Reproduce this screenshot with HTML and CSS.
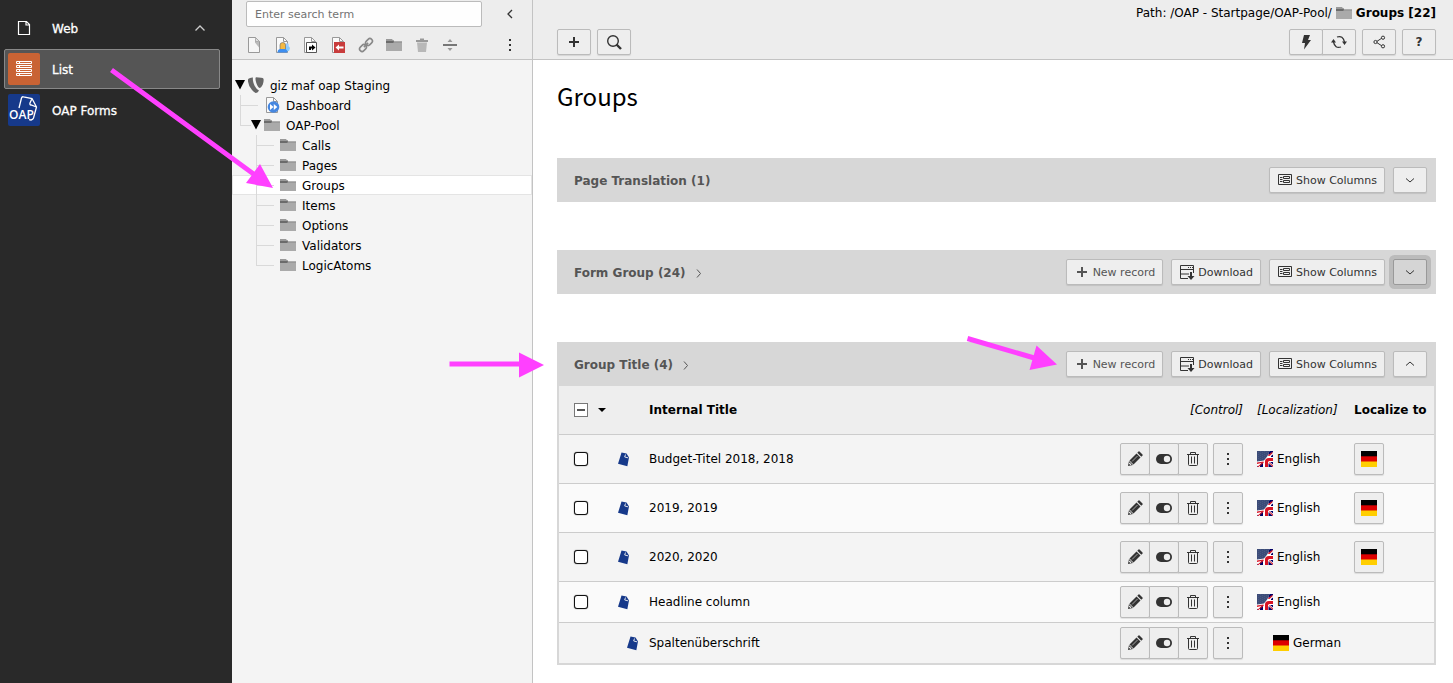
FILE: index.html
```html
<!DOCTYPE html>
<html lang="en">
<head>
<meta charset="utf-8">
<title>Groups</title>
<link rel="stylesheet" href="styles.css">
</head>
<body>
<svg class="sprite" aria-hidden="true">
  <symbol id="i-page" viewBox="0 0 16 16"><path d="M2.5.5h7l4 4v11h-11z" fill="#fff" fill-opacity=".5" stroke="#999"/><path d="M9 1v4.500l4 5V5z" fill="#bbb"/><path d="M9.500.5l4 4h-4z" fill="#ddd" stroke="#999" stroke-width=".6"/></symbol>
  <symbol id="i-sheet" viewBox="0 0 16 16"><path d="M2.500.5h7l4 4v11h-11z" fill="#fafafa" stroke="#999"/><path d="M9.500.5v4h4" fill="none" stroke="#999"/></symbol>
  <symbol id="i-folder" viewBox="0 0 16 16"><path d="M0 3h8v2h8v9H0z" fill="#aaa"/><path d="M8 2h8v2H8z" fill="none"/><path d="M0 2h6l1.500 2H0z" fill="#999"/><path d="M0 4h7.500l.5.500h8v.8H8L7 6H0z" fill="#6b6b6b"/></symbol>
  <symbol id="i-plus" viewBox="0 0 16 16"><path d="M8 3v10M3 8h10" stroke="currentColor" stroke-width="2"/></symbol>
  <symbol id="i-down" viewBox="0 0 16 16"><path d="M4 6.500l4 3.500 4-3.500" fill="none" stroke="currentColor"/></symbol>
  <symbol id="i-up" viewBox="0 0 16 16"><path d="M4 9.500L8 6l4 3.500" fill="none" stroke="currentColor"/></symbol>
  <symbol id="i-right" viewBox="0 0 16 16"><path d="M7 4.500l3.500 4L7 12.500" fill="none" stroke="currentColor"/></symbol>
  <symbol id="i-columns" viewBox="0 0 16 16"><path d="M1.500 2.500h13v10h-13z" fill="none" stroke="currentColor"/><path d="M3 5.500h2.500M3 7.500h2.500M3 9.500h2.500" stroke="currentColor"/><path d="M6.500 4.500h6v2h-6zM6.500 8.500h6v2h-6z" fill="none" stroke="currentColor"/></symbol>
  <symbol id="i-download" viewBox="0 0 16 16"><path d="M9 14.500H1.500v-13h13V9M1.500 5.500h13M1.500 10H10" fill="none" stroke="currentColor"/><path d="M9 3h1v1H9zM11 3h1v1h-1zM13 3h1v1h-1z" fill="currentColor"/><path d="M11 8h2v4h2.500L12 16l-3.500-4H11z" fill="currentColor"/></symbol>
  <symbol id="i-pencil" viewBox="0 0 16 16"><path d="M1 15l1-5 4 4z" fill="#333"/><path d="M2.500 9.500l7-7 4 4-7 7z" fill="#333"/><path d="M10.300 1.700l1.200-1.200q.5-.4 1 0l3 3q.4.5 0 1l-1.200 1.200z" fill="#333"/><path d="M5 10.500l5.500-5.500" stroke="#eee" stroke-width=".6"/><path d="M2.200 12l1.800 1.800" stroke="#eee" stroke-width="1.200"/></symbol>
  <symbol id="i-toggle" viewBox="0 0 16 16"><rect y="3" width="16" height="10" rx="5" fill="#333"/><circle cx="11" cy="8" r="3.200" fill="#eee"/></symbol>
  <symbol id="i-trash" viewBox="0 0 16 16"><path d="M2 3.500h12M5.500 3V1.500h5V3M3.500 4v9.500q0 1 1 1h7q1 0 1-1V4M6.500 5.500v7M9.500 5.500v7" fill="none" stroke="#333"/></symbol>
  <symbol id="i-dots" viewBox="0 0 16 16"><path d="M7 2h2v2H7zM7 7h2v2H7zM7 12h2v2H7z" fill="#333"/></symbol>
  <symbol id="i-de" viewBox="0 0 16 16"><path d="M0 0h16v16H0z" fill="#ffce00"/><path d="M0 0h16v10.500H0z" fill="#d00"/><path d="M0 0h16v5.300H0z"/></symbol>
  <symbol id="i-en" viewBox="0 0 16 16"><path d="M0 0h16v16H0z" fill="#fff"/><path d="M12.500 0H16v1l-3.500 2.500h-1.500zM14 5l2-1.500V7h-2zM0 14.500V16h1zM3 16v-2.500l3-2.500v5zM11 16v-4l5 4zM13 11h3v2.500z" fill="#006"/><path d="M8 16V8.500Q8 6 11 6h5v4.500h-4.500V16z" fill="#fff"/><path d="M8 16v-5.500q0-3.500 4-3.500h4v2.900h-3.500q-1.500 0-1.500 1.600V16z" fill="#d81424"/><path d="M10.500 4.500L15.500.8v1.400L12.500 5zM0 16l6-5 .8.800L1.500 16zM12 11l4 3.500V16l-4-4z" fill="#d81424"/><path d="M0 0h12.500L10.500 5 7 9.500 0 10.500z" fill="#3c4c78"/><path d="M0 11.500l6.500-1v1L0 13z" fill="#d81424"/><path d="M1.500 1v9M3.500 0v9.500M5.500 1v8M7.500 0v6.500M9.500 1v3" stroke="#66769e" stroke-width=".5" stroke-dasharray=".6 1.400"/></symbol>
  <symbol id="i-record" viewBox="0 0 16 16"><path d="M5.500 1.500l5 1 2.500 4-1.700 8.700L2 12.700z" fill="#16398a"/><path d="M9.500 3.500L8.700 6l3.300.8" fill="none" stroke="#f4f4f4" stroke-width=".9"/></symbol>
</svg>

<div class="app">
  <nav class="modules" aria-label="Modules">
    <button class="module">
      <svg class="icon32" viewBox="0 0 32 32"><path d="M10.500 9.500h8l3 3v10h-11zM18 9.500v3.500h3.500" fill="none" stroke="#fff" stroke-width="1.200"/></svg>
      <span>Web</span>
      <svg class="icon chev" viewBox="0 0 16 16"><path d="M3.500 10.500L8 6l4.500 4.500" fill="none" stroke="currentColor" stroke-width="1.300"/></svg>
    </button>
    <a class="module active" href="#list">
      <svg class="icon32" viewBox="0 0 32 32"><rect width="32" height="32" rx="2" fill="#c96334"/><path d="M8.500 8.500h15v2h-15zM8.500 12.500h15v2h-15zM8.500 16.500h15v2h-15zM8.500 20.500h15v2h-15zM11.500 8v3M11.500 12v3M11.500 16v3M11.500 20v3" fill="none" stroke="#fff"/></svg>
      <span>List</span>
    </a>
    <a class="module" href="#forms">
      <svg class="icon32" viewBox="0 0 32 32"><rect width="32" height="32" rx="2" fill="#16398a"/><path d="M11 14l2.500-10q.5-1.600 2-1.200l8.500 1.700 4.500 8.500-3 11q-.5 1.500-2.500 2l-2-.3M24 4.500l-2 4.500q-.5 1.700 1 2l5.500 2" fill="none" stroke="#fff" stroke-width="1.300"/><text x="1" y="25" class="logo-text">OAP</text></svg>
      <span>OAP Forms</span>
    </a>
  </nav>

  <aside class="pagetree">
    <div class="tree-head">
      <div class="tree-search">
        <input type="text" placeholder="Enter search term" aria-label="Enter search term">
        <button class="plain" aria-label="Collapse"><svg class="icon" viewBox="0 0 16 16"><path d="M10 4L6 8l4 4" fill="none" stroke="#333" stroke-width="1.300"/></svg></button>
      </div>
      <div class="tree-tools">
        <button class="plain" aria-label="Page"><svg class="icon"><use href="#i-page"/></svg></button>
        <button class="plain" aria-label="User section"><svg class="icon" viewBox="0 0 16 16"><use href="#i-sheet"/><path d="M11 9q4-1 5 2l-1 3h-4z" fill="#8cf"/><circle cx="13" cy="8" r="1.800" fill="#9cf"/><path d="M6 12.500V8q0-2.500 2.800-2.500T11.500 8v4.500z" fill="#f5b942" stroke="#666" stroke-width=".6"/><path d="M3.500 15.500q0-3.500 3-3.500h4q3 0 3 3.500z" fill="#3d8ef0"/></svg></button>
        <button class="plain" aria-label="Shortcut"><svg class="icon" viewBox="0 0 16 16"><use href="#i-sheet"/><path d="M4.500 5.500h10v10h-10z" fill="#fff" stroke="#555"/><path d="M7 13V9.500h3V7.500l3.500 3-3.500 3v-2H9V13z"/></svg></button>
        <button class="plain" aria-label="Mount point"><svg class="icon" viewBox="0 0 16 16"><use href="#i-sheet"/><path d="M4 5h11v11H4z" fill="#c83c3c"/><path d="M5.500 10.500L9 7.500v2h4.500v2H9v2z" fill="#fff"/></svg></button>
        <button class="plain" aria-label="Link"><svg class="icon" viewBox="0 0 16 16"><g transform="rotate(-45 8 8)" fill="none" stroke="#888" stroke-width="1.600"><rect x="0" y="5.500" width="7.500" height="5" rx="2.500"/><rect x="8.500" y="5.500" width="7.500" height="5" rx="2.500"/><path d="M5 8h6"/></g></svg></button>
        <button class="plain" aria-label="Folder"><svg class="icon"><use href="#i-folder"/></svg></button>
        <button class="plain" aria-label="Recycler"><svg class="icon" viewBox="0 0 16 16"><path d="M2 3h4V1.500h4V3h4v2H2z" fill="#999"/><path d="M3 5.500h10L12 15H4z" fill="#b8b8b8"/></svg></button>
        <button class="plain" aria-label="Divider"><svg class="icon" viewBox="0 0 16 16"><path d="M1 7h14v2H1z" fill="#777"/><path d="M5.500 5L8 2l2.500 3zM5.500 11L8 14l2.500-3z" fill="#999"/></svg></button>
        <button class="plain more" aria-label="More"><svg class="icon"><use href="#i-dots"/></svg></button>
      </div>
    </div>
    <ul class="tree">
      <li class="node root"><svg class="caret" viewBox="0 0 10 10"><path d="M0 0h10L5 9.500z"/></svg><svg class="icon" viewBox="0 0 16 16"><path d="M5 .5Q.5 1 0 2.500q-.5 5 4 10.500 2 2.500 4 3 2-.5 3-2.500Q7.500 12 5.500 6 4.500 2.500 5 .5zM8 .3q6.500 0 7.500 1.500.5 2.500-.8 6Q13 11 12 11q-2 0-3.700-5Q6.800 1 8 .3z" fill="#666"/></svg>giz maf oap Staging</li>
      <li class="node l1"><span class="guide"></span><svg class="icon" viewBox="0 0 16 16"><use href="#i-sheet"/><circle cx="9.500" cy="10" r="5.800" fill="#4687e0"/><path d="M6 7l3.500 3L6 13zM9.800 7l3.500 3-3.500 3z" fill="#fff"/></svg>Dashboard</li>
      <li class="node l1 parent"><span class="guide last"></span><svg class="caret" viewBox="0 0 10 10"><path d="M0 0h10L5 9.500z"/></svg><svg class="icon"><use href="#i-folder"/></svg>OAP-Pool</li>
      <li class="node l2"><span class="guide"></span><svg class="icon"><use href="#i-folder"/></svg>Calls</li>
      <li class="node l2"><span class="guide"></span><svg class="icon"><use href="#i-folder"/></svg>Pages</li>
      <li class="node l2 selected"><span class="guide"></span><svg class="icon"><use href="#i-folder"/></svg>Groups</li>
      <li class="node l2"><span class="guide"></span><svg class="icon"><use href="#i-folder"/></svg>Items</li>
      <li class="node l2"><span class="guide"></span><svg class="icon"><use href="#i-folder"/></svg>Options</li>
      <li class="node l2"><span class="guide"></span><svg class="icon"><use href="#i-folder"/></svg>Validators</li>
      <li class="node l2"><span class="guide last"></span><svg class="icon"><use href="#i-folder"/></svg>LogicAtoms</li>
    </ul>
  </aside>

  <main class="content">
    <header class="dochead">
      <div class="path"><span>Path: /OAP - Startpage/OAP-Pool/</span><svg class="icon"><use href="#i-folder"/></svg><strong>Groups [22]</strong></div>
      <div class="bar">
        <button class="btn sq" aria-label="New"><svg class="icon"><use href="#i-plus"/></svg></button>
        <button class="btn sq" aria-label="Search"><svg class="icon" viewBox="0 0 16 16"><circle cx="7" cy="7" r="5.300" fill="none" stroke="#333" stroke-width="1.400"/><path d="M10.500 10.500l4.500 4.500" stroke="#333" stroke-width="2.400"/></svg></button>
        <div class="group push">
          <button class="btn sq" aria-label="Clear cache"><svg class="icon" viewBox="0 0 16 16"><path d="M6 1h6l-2 5h3L6 15.500 7 9H4z" fill="#333"/></svg></button>
          <button class="btn sq" aria-label="Reload"><svg class="icon" viewBox="0 0 16 16"><path d="M6 3q6-2 7.500 5M10 13q-6 2-7.500-5" fill="none" stroke="#333" stroke-width="1.300"/><path d="M11 7.500h5L13.500 11zM0 8.500h5L2.500 5z" fill="#333"/></svg></button>
        </div>
        <button class="btn sq" aria-label="Share"><svg class="icon" viewBox="0 0 16 16"><path d="M11 4L5 8l6 4" fill="none" stroke="#333"/><g fill="#eee" stroke="#333"><circle cx="12" cy="3.700" r="1.600"/><circle cx="4.500" cy="8" r="1.600"/><circle cx="12" cy="12.300" r="1.600"/></g></svg></button>
        <button class="btn sq help">?</button>
      </div>
    </header>

    <div class="body">
      <h1>Groups</h1>

      <section class="panel">
        <div class="panel-head"><h2>Page Translation (1)</h2>
          <button class="btn"><svg class="icon"><use href="#i-columns"/></svg>Show Columns</button>
          <button class="btn sq" aria-label="Expand"><svg class="icon"><use href="#i-down"/></svg></button>
        </div>
      </section>

      <section class="panel">
        <div class="panel-head"><h2>Form Group (24)<svg class="icon"><use href="#i-right"/></svg></h2>
          <button class="btn new"><svg class="icon"><use href="#i-plus"/></svg>New record</button>
          <button class="btn dl"><svg class="icon"><use href="#i-download"/></svg>Download</button>
          <button class="btn"><svg class="icon"><use href="#i-columns"/></svg>Show Columns</button>
          <button class="btn sq focused" aria-label="Expand"><svg class="icon"><use href="#i-down"/></svg></button>
        </div>
      </section>

      <section class="panel">
        <div class="panel-head"><h2>Group Title (4)<svg class="icon"><use href="#i-right"/></svg></h2>
          <button class="btn new"><svg class="icon"><use href="#i-plus"/></svg>New record</button>
          <button class="btn dl"><svg class="icon"><use href="#i-download"/></svg>Download</button>
          <button class="btn"><svg class="icon"><use href="#i-columns"/></svg>Show Columns</button>
          <button class="btn sq" aria-label="Collapse"><svg class="icon"><use href="#i-up"/></svg></button>
        </div>
        <div class="table-wrap">
        <table>
          <colgroup><col class="c-check"><col class="c-icon"><col><col class="c-control"><col class="c-lang"><col class="c-to"></colgroup>
          <thead>
            <tr><th><span class="checks"><input class="all" type="checkbox" aria-label="Toggle all"><svg class="drop" viewBox="0 0 8 4"><path d="M0 0h8L4 4z"/></svg></span></th><th></th><th>Internal Title</th><th class="em control">[Control]</th><th class="em">[Localization]</th><th>Localize to</th></tr>
          </thead>
          <tbody>
            <tr class="tall"><td><input type="checkbox" aria-label="Select Budget-Titel 2018"></td><td><svg class="icon rec"><use href="#i-record"/></svg></td><td>Budget-Titel 2018, 2018</td>
              <td><div class="actions"><div class="group"><button class="btn act" aria-label="Edit"><svg class="icon"><use href="#i-pencil"/></svg></button><button class="btn act" aria-label="Hide"><svg class="icon"><use href="#i-toggle"/></svg></button><button class="btn act" aria-label="Delete"><svg class="icon"><use href="#i-trash"/></svg></button></div><button class="btn act" aria-label="More"><svg class="icon"><use href="#i-dots"/></svg></button></div></td>
              <td><span class="lang"><svg class="icon"><use href="#i-en"/></svg>English</span></td><td><button class="btn act" aria-label="Localize to German"><svg class="icon"><use href="#i-de"/></svg></button></td></tr>
            <tr class="tall"><td><input type="checkbox" aria-label="Select 2019"></td><td><svg class="icon rec"><use href="#i-record"/></svg></td><td>2019, 2019</td>
              <td><div class="actions"><div class="group"><button class="btn act" aria-label="Edit"><svg class="icon"><use href="#i-pencil"/></svg></button><button class="btn act" aria-label="Hide"><svg class="icon"><use href="#i-toggle"/></svg></button><button class="btn act" aria-label="Delete"><svg class="icon"><use href="#i-trash"/></svg></button></div><button class="btn act" aria-label="More"><svg class="icon"><use href="#i-dots"/></svg></button></div></td>
              <td><span class="lang"><svg class="icon"><use href="#i-en"/></svg>English</span></td><td><button class="btn act" aria-label="Localize to German"><svg class="icon"><use href="#i-de"/></svg></button></td></tr>
            <tr class="tall"><td><input type="checkbox" aria-label="Select 2020"></td><td><svg class="icon rec"><use href="#i-record"/></svg></td><td>2020, 2020</td>
              <td><div class="actions"><div class="group"><button class="btn act" aria-label="Edit"><svg class="icon"><use href="#i-pencil"/></svg></button><button class="btn act" aria-label="Hide"><svg class="icon"><use href="#i-toggle"/></svg></button><button class="btn act" aria-label="Delete"><svg class="icon"><use href="#i-trash"/></svg></button></div><button class="btn act" aria-label="More"><svg class="icon"><use href="#i-dots"/></svg></button></div></td>
              <td><span class="lang"><svg class="icon"><use href="#i-en"/></svg>English</span></td><td><button class="btn act" aria-label="Localize to German"><svg class="icon"><use href="#i-de"/></svg></button></td></tr>
            <tr><td><input type="checkbox" aria-label="Select Headline column"></td><td><svg class="icon rec"><use href="#i-record"/></svg></td><td>Headline column</td>
              <td><div class="actions"><div class="group"><button class="btn act" aria-label="Edit"><svg class="icon"><use href="#i-pencil"/></svg></button><button class="btn act" aria-label="Hide"><svg class="icon"><use href="#i-toggle"/></svg></button><button class="btn act" aria-label="Delete"><svg class="icon"><use href="#i-trash"/></svg></button></div><button class="btn act" aria-label="More"><svg class="icon"><use href="#i-dots"/></svg></button></div></td>
              <td><span class="lang"><svg class="icon"><use href="#i-en"/></svg>English</span></td><td></td></tr>
            <tr class="child"><td></td><td><svg class="icon rec"><use href="#i-record"/></svg></td><td>Spaltenüberschrift</td>
              <td><div class="actions"><div class="group"><button class="btn act" aria-label="Edit"><svg class="icon"><use href="#i-pencil"/></svg></button><button class="btn act" aria-label="Hide"><svg class="icon"><use href="#i-toggle"/></svg></button><button class="btn act" aria-label="Delete"><svg class="icon"><use href="#i-trash"/></svg></button></div><button class="btn act" aria-label="More"><svg class="icon"><use href="#i-dots"/></svg></button></div></td>
              <td><span class="lang"><svg class="icon"><use href="#i-de"/></svg>German</span></td><td></td></tr>
          </tbody>
        </table>
        </div>
      </section>
    </div>
  </main>
</div>

<svg class="annotations" width="1100" height="400" viewBox="0 0 1100 400" aria-hidden="true">
  <g stroke="#ff40ff" stroke-width="5" fill="none"><path d="M111.500 70L255 175M449.500 364H522M967.500 338.500L1036 358.500"/></g>
  <path d="M260 164l13 24-27-5zM519 352.500l25 12.500-25 12.500zM1036.500 345.500l20.500 19-27.500 5.500z" fill="#ff40ff"/>
</svg>
</body>
</html>
```

FILE: styles.css
```css
* { box-sizing: border-box; }

body {
  margin: 0;
  font: 12px/18px Verdana, "DejaVu Sans", sans-serif;
  color: #000;
  background: #fff;
}

button, input { font: inherit; color: inherit; margin: 0; }
svg { display: block; flex: none; }

.sprite { display: none; }
.icon { width: 16px; height: 16px; }
.icon32 { width: 32px; height: 32px; }

.app {
  display: grid;
  grid-template-columns: 232px 301px minmax(0, 1fr);
  min-height: 100vh;
}

/* Module menu */
.modules {
  display: flex;
  flex-direction: column;
  gap: 1px;
  padding: 8px 12px 8px 4px;
  background: #292929;
}

.module {
  display: flex;
  align-items: center;
  gap: 12px;
  height: 40px;
  padding: 3px;
  border: 1px solid transparent;
  border-radius: 2px;
  background: none;
  color: #fff;
  text-decoration: none;
  -webkit-text-stroke: 0.3px #fff;
}

.module span { padding-top: 2px; }
.module.active { background: #555; border-color: #888; }
.chev { margin-left: auto; margin-right: 8px; color: #ccc; }

.logo-text {
  font: 600 12px "Open Sans", sans-serif;
  fill: #fff;
  -webkit-text-stroke: 0;
}

/* Page tree */
.pagetree {
  background: #f4f4f4;
  border-right: 1px solid #c3c3c3;
}

.tree-head {
  height: 60px;
  padding: 1px 14px 0;
  background: #ededed;
  border-bottom: 1px solid #c3c3c3;
}

.tree-search { display: flex; align-items: center; gap: 20px; }

.tree-search input {
  width: 236px;
  height: 26px;
  padding: 0 8px;
  border: 1px solid #bbb;
  border-radius: 2px;
  background: #fefefe;
  font-size: 11px;
}

.tree-search input::placeholder { color: #737373; opacity: 1; }

.plain { padding: 0; border: 0; background: none; }

.tree-tools { display: flex; gap: 12px; padding: 10px 0 0; }
.more { margin-left: auto; }

.tree { list-style: none; margin: 0; padding: 15px 0 0; }

.node { display: flex; align-items: center; gap: 6px; height: 20px; padding-top: 2px; }
.node > * { margin-top: -2px; }
.node .caret { width: 10px; height: 10px; }
.root { padding-left: 3px; }
.root .caret, .parent .caret { margin-right: -3px; }
.l1 { padding-left: 8px; }
.l2 { padding-left: 24px; }
.selected { background: #fff; box-shadow: inset 0 0 0 1px #e4e4e4; }

.guide {
  width: 18px;
  height: 20px;
  background:
    linear-gradient(#d9d9d9, #d9d9d9) 0 10px / 100% 1px no-repeat,
    linear-gradient(#d9d9d9, #d9d9d9) 0 0 / 1px 100% no-repeat;
}

.guide.last {
  background-size: 100% 1px, 1px 10px;
}

.parent .guide { width: 11px; margin-right: -6px; }

/* Document header */
.dochead {
  height: 60px;
  padding: 4px 17px 0 24px;
  background: #ededed;
  border-bottom: 1px solid #c3c3c3;
}

.path { display: flex; justify-content: flex-end; align-items: center; gap: 4px; }
.bar { display: flex; gap: 6px; padding-top: 7px; }
.push { margin-left: auto; }

.btn {
  display: flex;
  align-items: center;
  justify-content: center;
  gap: 3px;
  height: 26px;
  padding: 2px 7px 0;
  border: 1px solid #bbb;
  border-radius: 2px;
  background: #eee;
  box-shadow: 0 1px 1px rgba(0, 0, 0, 0.1);
  color: #333;
  font-size: 11px;
  line-height: 16px;
  white-space: nowrap;
}

.btn > svg { margin-top: -2px; }
.btn.sq { width: 34px; padding: 2px 0 0; }
.btn.new { color: #555; }
.btn.help { padding: 0; font-weight: bold; font-size: 12px; }
.btn.act { width: 30px; height: 32px; padding: 2px 0 0; }
.btn.focused { background: #d5d5d5; border-color: #999; box-shadow: 0 0 0 4px #bbb; }

.group { display: flex; }
.group .btn + .btn { margin-left: -1px; border-radius: 0 2px 2px 0; }

/* Content */
.body { padding: 20px 17px 18px 24px; }

h1 {
  margin: 0 0 46px;
  font: 400 24px/32px "Source Sans Pro", "Noto Sans CJK SC", sans-serif;
}

.panel + .panel { margin-top: 48px; }

.panel-head {
  display: flex;
  align-items: center;
  gap: 8px;
  min-height: 44px;
  padding: 0 9px 0 17px;
  background: #d7d7d7;
}

h2 {
  display: flex;
  align-items: center;
  gap: 4px;
  margin: 0 auto 0 0;
  padding-top: 2px;
  font-size: 12px;
  color: #555;
}

.table-wrap { border: 2px solid #d7d7d7; border-top-width: 0; }

table {
  width: 100%;
  border-collapse: collapse;
  table-layout: fixed;
  background: #f4f4f4;
}

.c-check { width: 59px; }
.c-icon { width: 31px; }
.c-control { width: 137px; }
.c-lang { width: 97px; }
.c-to { width: 80px; }

th, td { height: 41px; padding: 0; text-align: left; white-space: nowrap; }
th { height: 48px; padding-top: 1px; background: #eee; }
.tall td { height: 49px; }
tr + tr td, tbody tr:first-child td { border-top: 1px solid #ccc; }
tbody tr:nth-child(even) { background: #fafafa; }
th:first-child, td:first-child { padding-left: 15px; }
.em { font-weight: normal; font-style: italic; }
.em.control { text-align: right; padding-right: 14px; }

input[type="checkbox"] {
  appearance: none;
  display: block;
  width: 14px;
  height: 14px;
  border: 1px solid #111;
  border-radius: 3px;
  background: #fff;
  box-shadow: 0 0 1px #111;
}

input[type="checkbox"].all {
  border-color: #777;
  border-radius: 0;
  box-shadow: none;
  background: linear-gradient(#555, #555) center / 8px 2px no-repeat #fff;
}

.checks { display: flex; align-items: center; gap: 10px; }
.drop { width: 8px; height: 4px; }
.rec { margin-left: -2px; }
.child .rec { margin-left: 7px; }
.actions { display: flex; gap: 5px; }
.lang { display: flex; align-items: center; gap: 4px; }
.child .lang { padding-left: 16px; }

/* Arrows drawn over the interface */
.annotations {
  position: absolute;
  top: 0;
  left: 0;
  pointer-events: none;
}
```
